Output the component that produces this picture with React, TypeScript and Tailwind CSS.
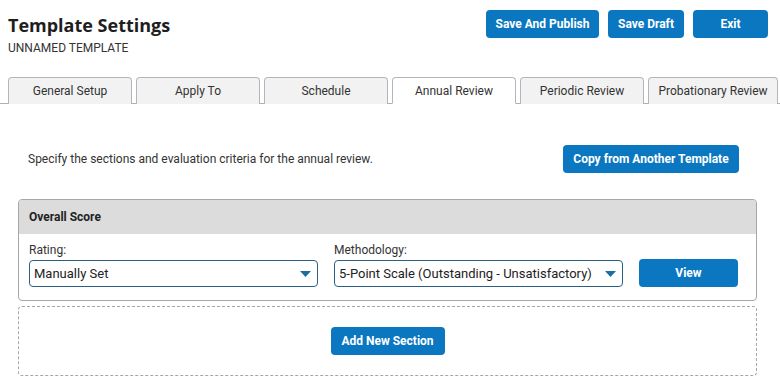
import React from "react";

const tabs = [
  { label: "General Setup", w: "w-[124px]" },
  { label: "Apply To", w: "w-[124px]" },
  { label: "Schedule", w: "w-[124px]" },
  { label: "Annual Review", w: "w-[124px]", active: true },
  { label: "Periodic Review", w: "w-[124px]" },
  { label: "Probationary Review", w: "w-[130px]" },
];

function Btn({ children, className = "" }: { children: React.ReactNode; className?: string }) {
  return (
    <button
      className={
        "h-[28px] rounded-[4px] bg-[#0a77c0] text-white text-[12px] font-bold flex items-center justify-center " +
        className
      }
    >
      {children}
    </button>
  );
}

function Select({ value }: { value: string }) {
  return (
    <div className="h-[27px] w-[289px] rounded-[4px] border border-[#2a5f85] flex items-center justify-between pl-[4px] pr-[6px] text-[13px] text-[#222]">
      <span>{value}</span>
      <svg width="11" height="6" viewBox="0 0 11 6">
        <path d="M0 0 H11 L5.5 6 Z" fill="#1d6ea3" />
      </svg>
    </div>
  );
}

export default function App() {
  return (
    <div
      className="w-[780px] h-[388px] bg-white text-[#222] overflow-hidden"
      style={{ fontFamily: "Roboto, 'Liberation Sans', sans-serif" }}
    >
      <div className="flex justify-between">
        <div className="pl-[8px] pt-[12px]">
          <div
            className="text-[18px] font-bold leading-[26px] text-[#1e1e1e]"
            style={{ fontFamily: "'Open Sans', sans-serif" }}
          >
            Template Settings
          </div>
          <div className="text-[12px] leading-[14px] mt-[3px] text-[#333]">UNNAMED TEMPLATE</div>
        </div>
        <div className="flex gap-[9px] pt-[10px] pr-[12px]">
          <Btn className="w-[113px]">Save And Publish</Btn>
          <Btn className="w-[76px]">Save Draft</Btn>
          <Btn className="w-[75px]">Exit</Btn>
        </div>
      </div>

      <div className="mt-[22px] flex gap-[4px] pl-[8px] border-b border-[#a8b0b8] h-[27px]">
        {tabs.map((t) => (
          <div
            key={t.label}
            className={
              t.w +
              " h-[27px] rounded-t-[4px] border border-[#b0b6bc] flex items-center justify-center text-[12px] text-[#333] " +
              (t.active ? "bg-white border-b-white" : "bg-[#f2f2f2] border-b-0 h-[26px]")
            }
          >
            {t.label}
          </div>
        ))}
      </div>

      <div className="pl-[18px] pr-[23px]">
        <div className="mt-[41px] flex items-center justify-between pl-[10px] pr-[18px]">
          <span className="text-[12px] text-[#333]">
            Specify the sections and evaluation criteria for the annual review.
          </span>
          <Btn className="w-[176px] h-[27px]">Copy from Another Template</Btn>
        </div>

        <div className="mt-[26px] rounded-[4px] border border-[#a6a6a6] overflow-hidden">
          <div className="h-[34px] bg-[#dcdcdc] flex items-center pl-[10px] text-[12px] font-bold text-[#222]">
            Overall Score
          </div>
          <div className="flex items-end gap-[16px] pl-[10px] pr-[17px] pt-[9px] pb-[13px]">
            <div>
              <div className="text-[12px] leading-[14px] mb-[3px] text-[#333]">Rating:</div>
              <Select value="Manually Set" />
            </div>
            <div>
              <div className="text-[12px] leading-[14px] mb-[3px] text-[#333]">Methodology:</div>
              <Select value="5-Point Scale (Outstanding - Unsatisfactory)" />
            </div>
            <Btn className="w-[99px] h-[27px]">View</Btn>
          </div>
        </div>

        <div className="mt-[5px] h-[70px] rounded-[4px] border border-dashed border-[#a6a6a6] flex items-center justify-center">
          <Btn className="w-[114px] h-[27px]">Add New Section</Btn>
        </div>
      </div>
    </div>
  );
}
